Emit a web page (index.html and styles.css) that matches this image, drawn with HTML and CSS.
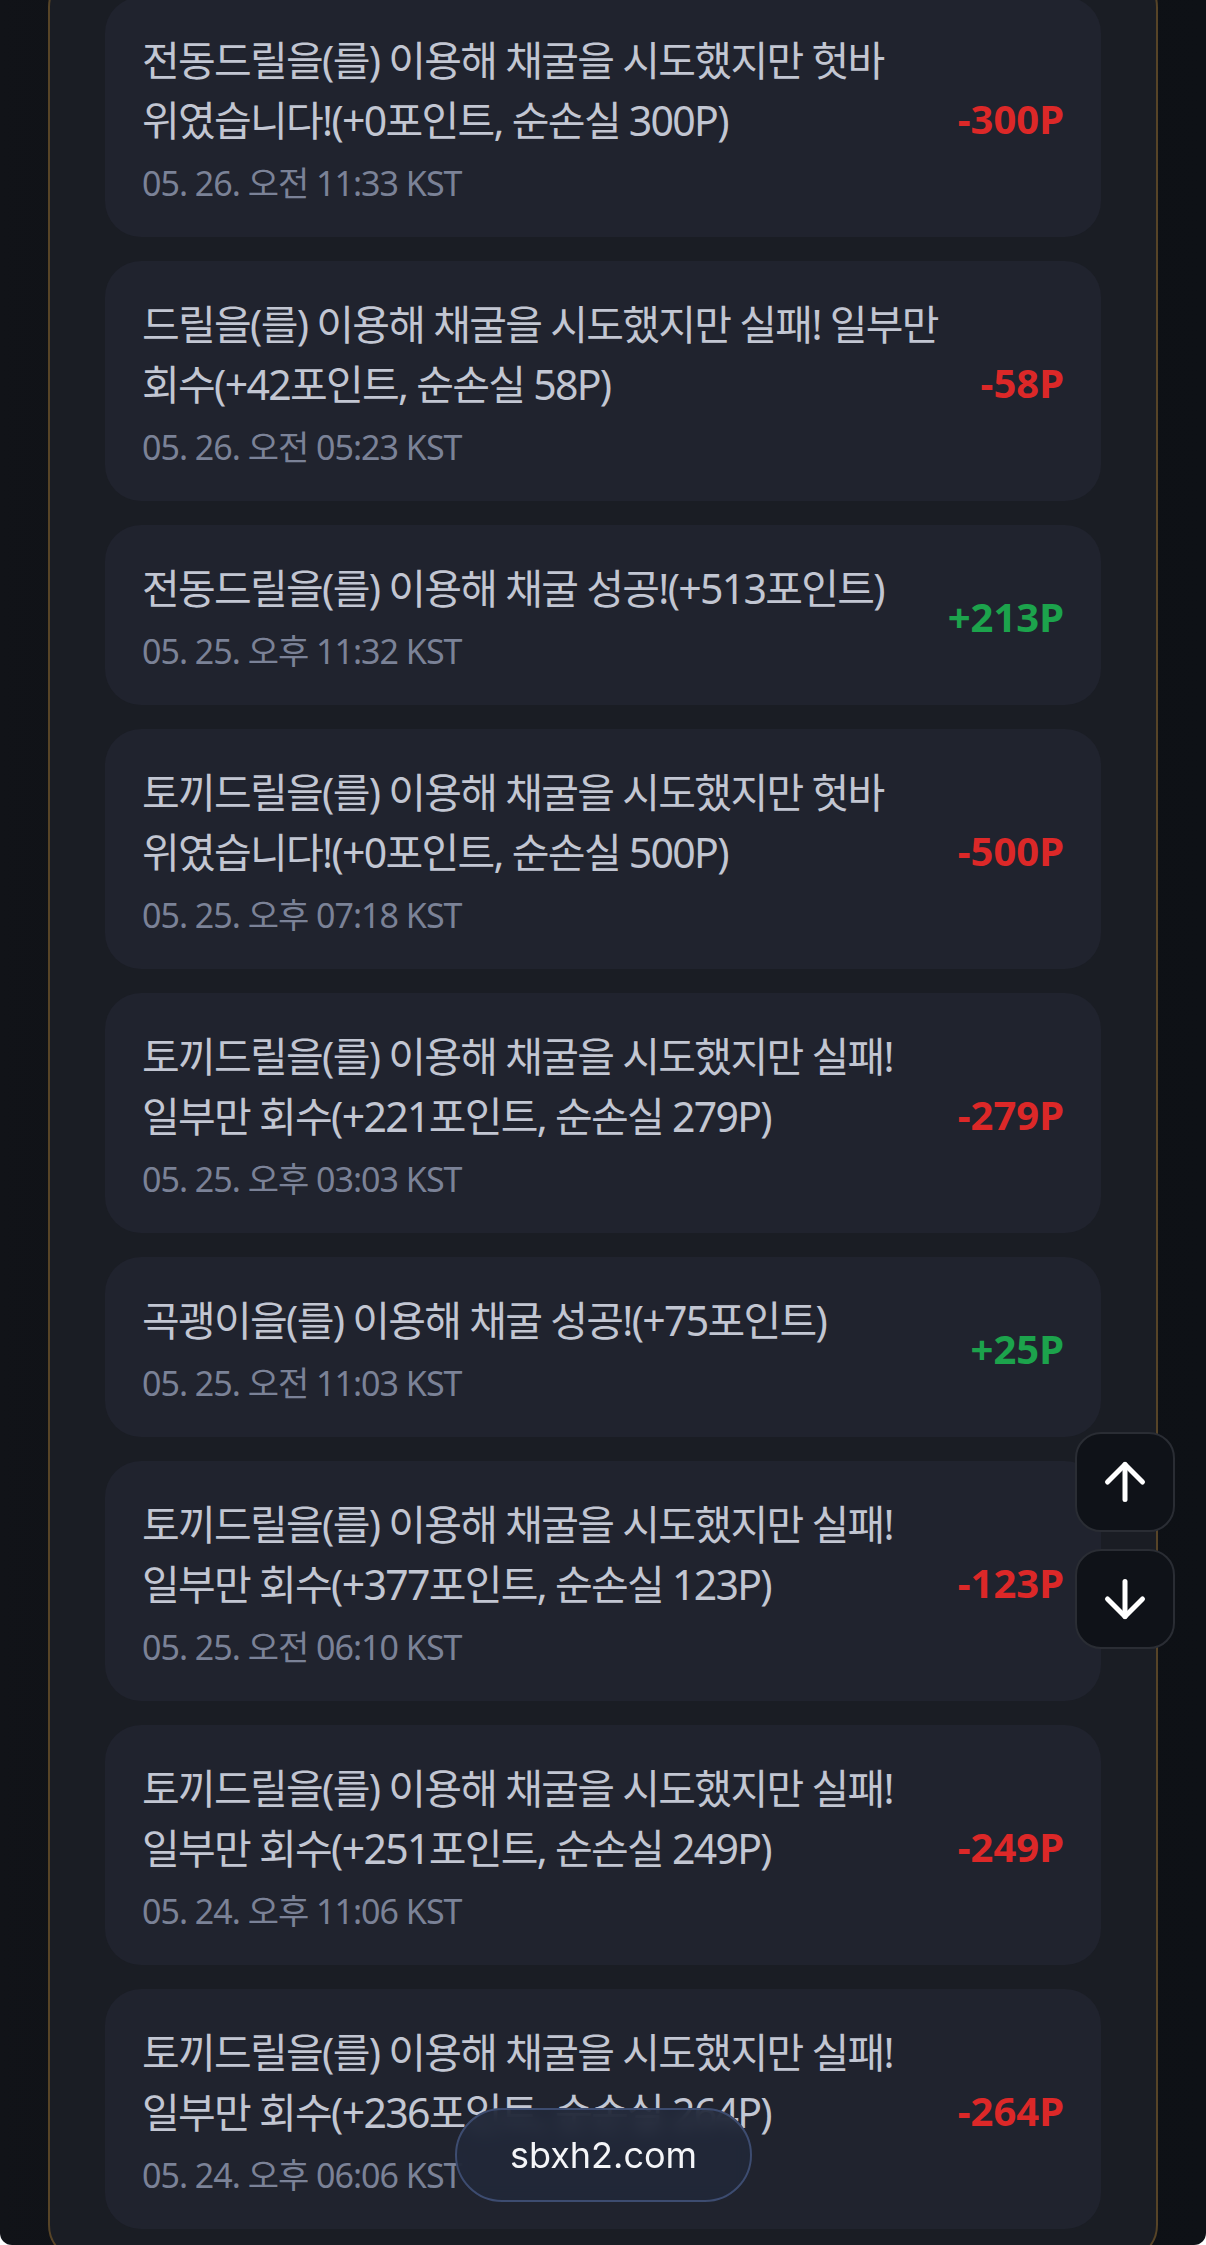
FILE: index.html
```html
<!DOCTYPE html>
<html lang="ko">
<head>
  <meta charset="UTF-8">
  <title>채굴 기록</title>
  <link rel="stylesheet" href="styles.css">
</head>
<body>
  <div class="screen">
    <div class="panel">
      <ul class="log">
        <li class="entry">
          <div class="entry-body">
            <p class="entry-text">전동드릴을(를) 이용해 채굴을 시도했지만 헛바위였습니다!(+0포인트, 순손실 300P)</p>
            <p class="entry-time">05. 26. 오전 11:33 KST</p>
          </div>
          <span class="entry-amount loss">-300P</span>
        </li>
        <li class="entry">
          <div class="entry-body">
            <p class="entry-text">드릴을(를) 이용해 채굴을 시도했지만 실패! 일부만 회수(+42포인트, 순손실 58P)</p>
            <p class="entry-time">05. 26. 오전 05:23 KST</p>
          </div>
          <span class="entry-amount loss">-58P</span>
        </li>
        <li class="entry">
          <div class="entry-body">
            <p class="entry-text">전동드릴을(를) 이용해 채굴 성공!(+513포인트)</p>
            <p class="entry-time">05. 25. 오후 11:32 KST</p>
          </div>
          <span class="entry-amount gain">+213P</span>
        </li>
        <li class="entry">
          <div class="entry-body">
            <p class="entry-text">토끼드릴을(를) 이용해 채굴을 시도했지만 헛바위였습니다!(+0포인트, 순손실 500P)</p>
            <p class="entry-time">05. 25. 오후 07:18 KST</p>
          </div>
          <span class="entry-amount loss">-500P</span>
        </li>
        <li class="entry">
          <div class="entry-body">
            <p class="entry-text">토끼드릴을(를) 이용해 채굴을 시도했지만 실패! 일부만 회수(+221포인트, 순손실 279P)</p>
            <p class="entry-time">05. 25. 오후 03:03 KST</p>
          </div>
          <span class="entry-amount loss">-279P</span>
        </li>
        <li class="entry">
          <div class="entry-body">
            <p class="entry-text">곡괭이을(를) 이용해 채굴 성공!(+75포인트)</p>
            <p class="entry-time">05. 25. 오전 11:03 KST</p>
          </div>
          <span class="entry-amount gain">+25P</span>
        </li>
        <li class="entry">
          <div class="entry-body">
            <p class="entry-text">토끼드릴을(를) 이용해 채굴을 시도했지만 실패! 일부만 회수(+377포인트, 순손실 123P)</p>
            <p class="entry-time">05. 25. 오전 06:10 KST</p>
          </div>
          <span class="entry-amount loss">-123P</span>
        </li>
        <li class="entry">
          <div class="entry-body">
            <p class="entry-text">토끼드릴을(를) 이용해 채굴을 시도했지만 실패! 일부만 회수(+251포인트, 순손실 249P)</p>
            <p class="entry-time">05. 24. 오후 11:06 KST</p>
          </div>
          <span class="entry-amount loss">-249P</span>
        </li>
        <li class="entry">
          <div class="entry-body">
            <p class="entry-text">토끼드릴을(를) 이용해 채굴을 시도했지만 실패! 일부만 회수(+236포인트, 순손실 264P)</p>
            <p class="entry-time">05. 24. 오후 06:06 KST</p>
          </div>
          <span class="entry-amount loss">-264P</span>
        </li>
      </ul>
    </div>

    <div class="scroll-btns">
      <button class="scroll-btn" aria-label="맨 위로">
        <svg viewBox="0 0 24 24" width="60" height="60" fill="none" stroke="currentColor" stroke-width="2" stroke-linecap="round" stroke-linejoin="round"><path d="M5 12l7-7 7 7"/><path d="M12 19V5"/></svg>
      </button>
      <button class="scroll-btn" aria-label="맨 아래로">
        <svg viewBox="0 0 24 24" width="60" height="60" fill="none" stroke="currentColor" stroke-width="2" stroke-linecap="round" stroke-linejoin="round"><path d="M12 5v14"/><path d="M19 12l-7 7-7-7"/></svg>
      </button>
    </div>

    <div class="url-pill">sbxh2.com</div>
  </div>
</body>
</html>
```

FILE: styles.css
```css
html, body {
  margin: 0;
  padding: 0;
  background: #ffffff;
}

.screen {
  position: relative;
  height: 2245px;
  overflow: hidden;
  border-radius: 0 0 12px 12px;
  background: linear-gradient(90deg, #111318 0%, #0b0e13 40%, #0e1116 100%);
  font-family: "Noto Sans", "Noto Sans CJK KR", sans-serif;
}

/* scrolled list: top of the panel is above the viewport */
.panel {
  margin: -29px 48px 0;
  padding: 24px 55px 30px;
  background: #1a1d24;
  border: 2px solid #574427;
  border-radius: 36px;
}

.log {
  list-style: none;
  margin: 0;
  padding: 0;
  display: flex;
  flex-direction: column;
  gap: 24px;
}

.entry {
  display: flex;
  align-items: center;
  gap: 41px;
  padding: 33px 37px 31px 37px;
  background: #20232e;
  border-radius: 36px;
}

.entry-body {
  flex: 1;
  min-width: 0;
}

.entry-text {
  margin: 0;
  font-size: 41px;
  line-height: 60px;
  letter-spacing: -1.7px;
  color: #c2c6d2;
}

.entry-time {
  margin: 10px 0 0;
  font-size: 34px;
  line-height: 46px;
  letter-spacing: -1px;
  color: #7b8297;
}

.entry-amount {
  flex-shrink: 0;
  font-size: 40px;
  font-weight: 700;
}

.loss {
  color: #dc2828;
}

.gain {
  color: #1ca34c;
}

.scroll-btns {
  position: absolute;
  right: 31px;
  top: 1432px;
  display: flex;
  flex-direction: column;
  gap: 17px;
}

.scroll-btn {
  width: 100px;
  height: 100px;
  padding: 0;
  display: flex;
  align-items: center;
  justify-content: center;
  background: #0f1218;
  border: 2px solid #2a2d34;
  border-radius: 26px;
  color: #ffffff;
}

.url-pill {
  position: absolute;
  left: 455px;
  bottom: 43px;
  width: 297px;
  height: 94px;
  box-sizing: border-box;
  display: flex;
  align-items: center;
  justify-content: center;
  border: 2px solid #3d4c70;
  border-radius: 47px;
  background: rgba(33, 40, 57, 0.88);
  backdrop-filter: blur(8px);
  font-family: Inter, "Noto Sans", sans-serif;
  font-size: 36px;
  color: #f4f5f8;
}
```
